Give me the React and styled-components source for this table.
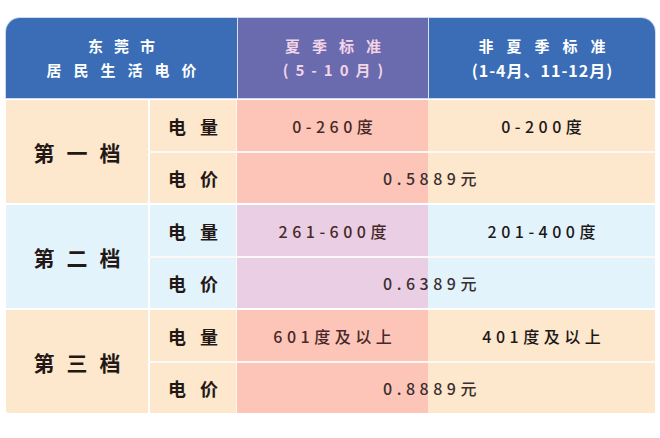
import React from "react";
import styled, { createGlobalStyle } from "styled-components";

const GlobalStyle = createGlobalStyle`
  html, body {
    margin: 0;
    padding: 0;
    background: #ffffff;
  }
  body {
    font-family: "Noto Sans CJK SC", "Noto Sans", sans-serif;
  }
`;

const COLS = "142px 89px 191px 227px";

const Table = styled.div`
  width: 649px;
  margin: 18px 0 0 6px;
  display: flex;
  flex-direction: column;
  gap: 2px;
  background: #ffffff;
`;

const HeaderRow = styled.div`
  display: grid;
  grid-template-columns: 231px 191px 227px;
  height: 80px;
  border-radius: 14px 14px 0 0;
  overflow: hidden;
  box-shadow: 0 0 0 1px #c9dcf0;
`;

const HeaderCell = styled.div`
  display: flex;
  flex-direction: column;
  align-items: center;
  justify-content: center;
  background: ${(p) => p.$bg};
  color: ${(p) => p.$color};
  border-left: ${(p) => (p.$divider ? "1px solid #d6e2f2" : "none")};
  font-weight: 700;
  font-size: 15px;
  line-height: 24px;
`;

const HeaderLine = styled.div`
  letter-spacing: ${(p) => p.$ls}px;
  padding-left: ${(p) => p.$ls}px;
  font-size: ${(p) => p.$size || 15}px;
  white-space: nowrap;
`;

const Tier = styled.div`
  display: grid;
  grid-template-columns: ${COLS};
  grid-template-rows: 51px 50px;
  row-gap: 2px;
  background: #fdf8f5;
`;

const TierLabel = styled.div`
  grid-row: 1 / span 2;
  display: flex;
  align-items: center;
  justify-content: center;
  background: ${(p) => p.$bg};
  font-size: 21px;
  font-weight: 700;
  color: #231815;
  letter-spacing: 12px;
  padding-left: 12px;
  border-radius: ${(p) => (p.$last ? "0 0 0 3px" : "0")};
`;

const SubLabel = styled.div`
  display: flex;
  align-items: center;
  justify-content: center;
  background: ${(p) => p.$bg};
  border-left: 2px solid #ffffff;
  border-right: 1px solid rgba(255, 255, 255, 0.7);
  font-size: 18px;
  font-weight: 700;
  color: #231815;
  letter-spacing: 14px;
  padding-left: 14px;
`;

const ValueCell = styled.div`
  display: flex;
  align-items: center;
  justify-content: center;
  background: ${(p) => p.$bg};
  font-size: 16px;
  letter-spacing: 4.5px;
  padding-left: 4.5px;
  white-space: nowrap;
  color: ${(p) => (p.$summer ? "#472929" : "#1c1818")};
  font-weight: 500;
`;

const PriceCell = styled.div`
  grid-column: 3 / span 2;
  display: flex;
  align-items: center;
  justify-content: center;
  padding-right: 28px;
  background: linear-gradient(
    90deg,
    ${(p) => p.$summer} 0 191px,
    ${(p) => p.$base} 191px 100%
  );
  font-size: 16px;
  letter-spacing: 4.5px;
  font-weight: 500;
  color: #3a2f2f;
`;

const tiers = [
  {
    name: "第一档",
    base: "#fde7cd",
    summer: "#fcc5b8",
    summerUse: "0-260度",
    normalUse: "0-200度",
    price: "0.5889元",
  },
  {
    name: "第二档",
    base: "#e3f3fc",
    summer: "#eaceE4",
    summerUse: "261-600度",
    normalUse: "201-400度",
    price: "0.6389元",
  },
  {
    name: "第三档",
    base: "#fde7cd",
    summer: "#fcc5b8",
    summerUse: "601度及以上",
    normalUse: "401度及以上",
    price: "0.8889元",
  },
];

export default function App() {
  return (
    <>
      <GlobalStyle />
      <Table>
        <HeaderRow>
          <HeaderCell $bg="#3a6db6" $color="#ffffff">
            <HeaderLine $ls={11}>东莞市</HeaderLine>
            <HeaderLine $ls={12}>居民生活电价</HeaderLine>
          </HeaderCell>
          <HeaderCell $bg="#6a6baf" $color="#f3d4e6" $divider>
            <HeaderLine $ls={12}>夏季标准</HeaderLine>
            <HeaderLine $ls={7}>(5-10月)</HeaderLine>
          </HeaderCell>
          <HeaderCell $bg="#3a6db6" $color="#ffffff" $divider>
            <HeaderLine $ls={13}>非夏季标准</HeaderLine>
            <HeaderLine $ls={1} $size={16}>(1-4月、11-12月)</HeaderLine>
          </HeaderCell>
        </HeaderRow>
        {tiers.map((t, i) => (
          <Tier key={t.name}>
            <TierLabel $bg={t.base} $last={i === tiers.length - 1}>
              {t.name}
            </TierLabel>
            <SubLabel $bg={t.base}>电量</SubLabel>
            <ValueCell $bg={t.summer} $summer>
              {t.summerUse}
            </ValueCell>
            <ValueCell $bg={t.base}>{t.normalUse}</ValueCell>
            <SubLabel $bg={t.base}>电价</SubLabel>
            <PriceCell $summer={t.summer} $base={t.base}>
              {t.price}
            </PriceCell>
          </Tier>
        ))}
      </Table>
    </>
  );
}
